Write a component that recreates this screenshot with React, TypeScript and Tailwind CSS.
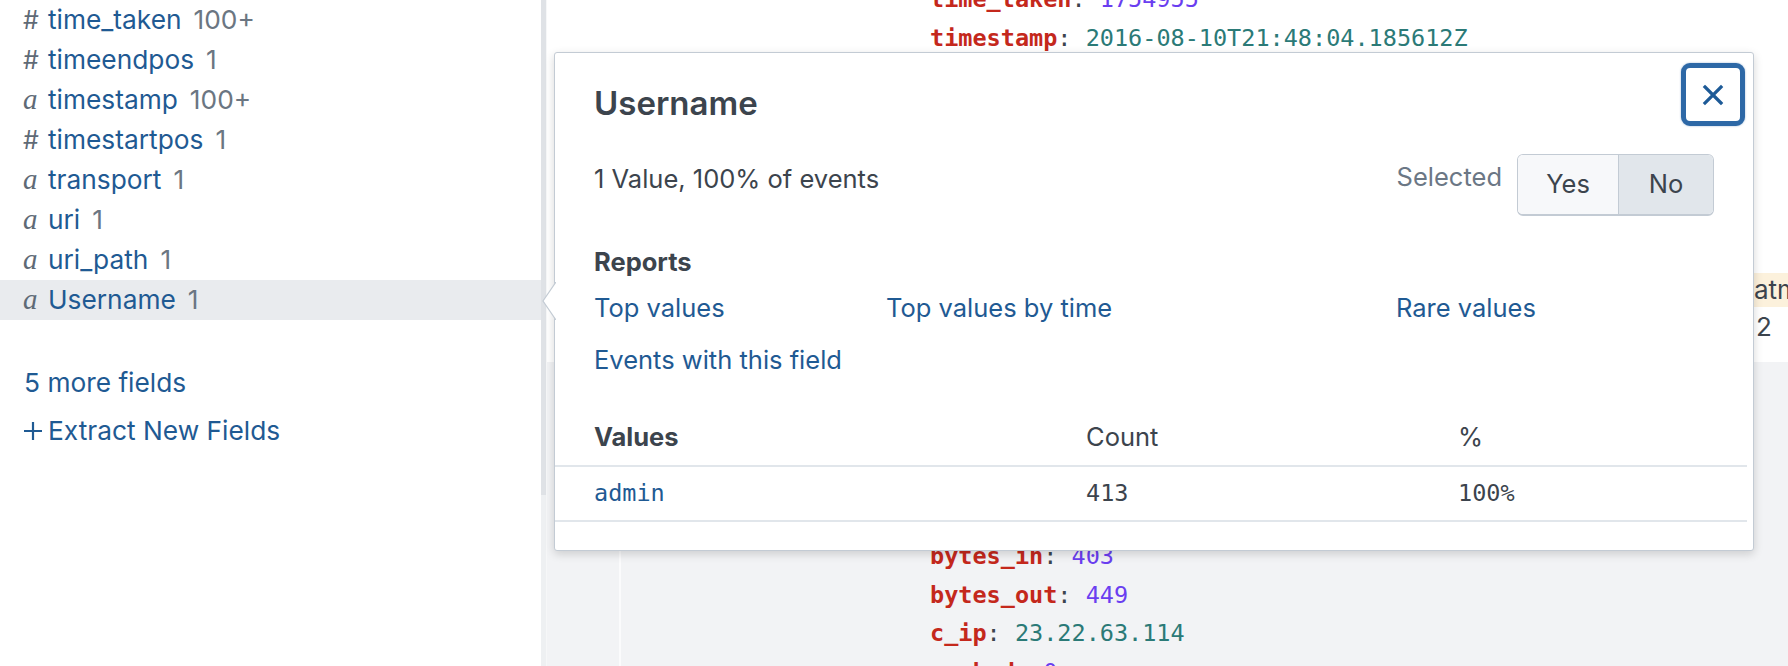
import React from "react";

const fields: { t: "#" | "a"; name: string; count: string; active?: boolean }[] = [
  { t: "#", name: "time_taken", count: "100+" },
  { t: "#", name: "timeendpos", count: "1" },
  { t: "a", name: "timestamp", count: "100+" },
  { t: "#", name: "timestartpos", count: "1" },
  { t: "a", name: "transport", count: "1" },
  { t: "a", name: "uri", count: "1" },
  { t: "a", name: "uri_path", count: "1" },
  { t: "a", name: "Username", count: "1", active: true },
];

function KV({ k, v, kind }: { k: string; v: string; kind: "num" | "str" }) {
  return (
    <div className="h-[38.5px] leading-[38.5px] whitespace-nowrap">
      <span className="font-bold text-[#c4281c]">{k}</span>
      <span className="text-[#3c444d]">: </span>
      <span className={kind === "num" ? "text-[#6a3ef0]" : "text-[#2b7a77]"}>{v}</span>
    </div>
  );
}

export default function App() {
  return (
    <div className="relative flex w-[1788px] h-[666px] overflow-hidden bg-white font-['Inter',sans-serif]">
      {/* Left field list */}
      <div className="w-[541px] shrink-0 bg-white flex flex-col text-[26.3px]">
        {fields.map((f) => (
          <div
            key={f.name}
            className={`h-[40px] shrink-0 flex items-center pl-[23px] ${f.active ? "bg-[#e9ebee]" : ""}`}
          >
            <span className="w-[25px] text-[#5f6a76]">
              {f.t === "#" ? (
                <span className="text-[25px]">#</span>
              ) : (
                <span className="italic font-['Liberation_Serif',serif] text-[29px]">a</span>
              )}
            </span>
            <span className="text-[#1f5a93]">{f.name}</span>
            <span className="ml-[12px] text-[#6b7682]">{f.count}</span>
          </div>
        ))}
        <div className="mt-[43px] h-[40px] leading-[40px] pl-[24px] text-[#1f5a93]">5 more fields</div>
        <div className="mt-[8px] h-[40px] flex items-center pl-[23px] text-[#1f5a93]">
          <svg width="20" height="20" viewBox="0 0 20 20" className="mr-[5px]">
            <path d="M10 1v18M1 10h18" stroke="#1f5a93" strokeWidth="2.2" />
          </svg>
          <span>Extract New Fields</span>
        </div>
      </div>

      {/* Divider / scrollbar */}
      <div className="w-[5px] shrink-0 flex flex-col bg-[#eef0f2]">
        <div className="h-[495px] shrink-0 bg-[#dfe2e6]" />
      </div>
      <div className="w-[1px] shrink-0 bg-[#f6f7f8]" />

      {/* Right events area */}
      <div className="flex-1 flex flex-col font-['DejaVu_Sans_Mono',monospace] text-[23.5px]">
        <div className="h-[362px] shrink-0 bg-white flex flex-col overflow-hidden">
          <div className="pl-[383px] -mt-[20px]">
            <KV k="time_taken" v="1754955" kind="num" />
            <KV k="timestamp" v="2016-08-10T21:48:04.185612Z" kind="str" />
          </div>
          <div className="pl-[1206px] mt-[216px] flex">
            <span className="h-[34px] leading-[34px] bg-[#fcf1dc] pl-[1px] pr-[40px] text-[#3c444d] font-['Inter',sans-serif] text-[26px]">
              atm
            </span>
          </div>
          <div className="pl-[1209px] mt-[2px] h-[36px] leading-[36px] text-[#3c444d] font-['Inter',sans-serif] text-[26px]">
            2
          </div>
        </div>
        <div className="flex-1 bg-[#f2f3f5] flex overflow-hidden">
          <div className="w-[72px] shrink-0" />
          <div className="w-[2px] shrink-0 bg-[#fbfbfc]" />
          <div className="pl-[309px] pt-[175px]">
            <KV k="bytes_in" v="403" kind="num" />
            <KV k="bytes_out" v="449" kind="num" />
            <KV k="c_ip" v="23.22.63.114" kind="str" />
            <KV k="cached" v="0" kind="num" />
          </div>
        </div>
      </div>

      {/* Popover */}
      <div className="absolute left-[554px] top-[52px] w-[1200px] h-[499px] bg-white border border-[#c3cbd4] rounded-[3px] shadow-[0_3px_10px_rgba(0,0,0,0.16)] text-[25.5px] text-[#3c444d]">
        {/* caret */}
        <svg
          width="14"
          height="38"
          viewBox="0 0 14 38"
          className="absolute left-[-13px] top-[229px]"
        >
          <path d="M14 0 L1 19 L14 38 Z" fill="#ffffff" />
          <path d="M14 0 L1 19 L14 38" fill="none" stroke="#c3cbd4" strokeWidth="1.2" />
        </svg>

        {/* close button */}
        <div className="absolute top-[10px] right-[8px] w-[64px] h-[63px] rounded-[9px] border-[5px] border-[#2d68a6] bg-white flex items-center justify-center shadow-[0_0_2px_rgba(45,104,166,0.5)]">
          <svg width="22" height="22" viewBox="0 0 22 22">
            <path d="M3 3 L19 19 M19 3 L3 19" stroke="#1d5a97" strokeWidth="3.2" strokeLinecap="square" />
          </svg>
        </div>

        <div className="pl-[39px] pr-[39px] pt-[30px] flex flex-col">
          <div className="h-[40px] leading-[40px] text-[33px] font-semibold text-[#3c444d]">Username</div>

          <div className="mt-[31px] h-[62px] flex items-start">
            <div className="pt-[5px] h-[40px] leading-[40px] flex-1">1 Value, 100% of events</div>
            <div className="pt-[3px] leading-[40px] text-[#6b7785] mr-[15px]">Selected</div>
            <div className="flex h-[62px] rounded-[6px] border border-[#c3cbd4] border-b-[2px] overflow-hidden">
              <div className="w-[100px] bg-[#f7f8fa] flex items-center justify-center text-[#3c444d]">Yes</div>
              <div className="w-[1px] bg-[#c3cbd4]" />
              <div className="w-[94px] bg-[#e1e6eb] flex items-center justify-center text-[#3c444d]">No</div>
            </div>
          </div>

          <div className="mt-[26px] h-[40px] leading-[40px] font-bold">Reports</div>
          <div className="mt-[6px] h-[40px] leading-[40px] flex text-[#1f5a93]">
            <div className="w-[292px]">Top values</div>
            <div className="w-[510px]">Top values by time</div>
            <div>Rare values</div>
          </div>
          <div className="mt-[12px] h-[40px] leading-[40px] text-[#1f5a93]">Events with this field</div>

          <div className="mt-[37px] -ml-[39px] -mr-[33px] flex flex-col">
            <div className="h-[40px] leading-[40px] flex pl-[39px]">
              <div className="w-[492px] font-bold">Values</div>
              <div className="w-[372px]">Count</div>
              <div>%</div>
            </div>
            <div className="mt-[8px] h-[2px] bg-[#e1e6eb]" />
            <div className="mt-[6px] h-[40px] leading-[40px] flex pl-[39px] font-['DejaVu_Sans_Mono',monospace] text-[23.5px]">
              <div className="w-[492px] text-[#1f5a93]">admin</div>
              <div className="w-[372px]">413</div>
              <div>100%</div>
            </div>
            <div className="mt-[7px] h-[2px] bg-[#e1e6eb]" />
          </div>
        </div>
      </div>
    </div>
  );
}
